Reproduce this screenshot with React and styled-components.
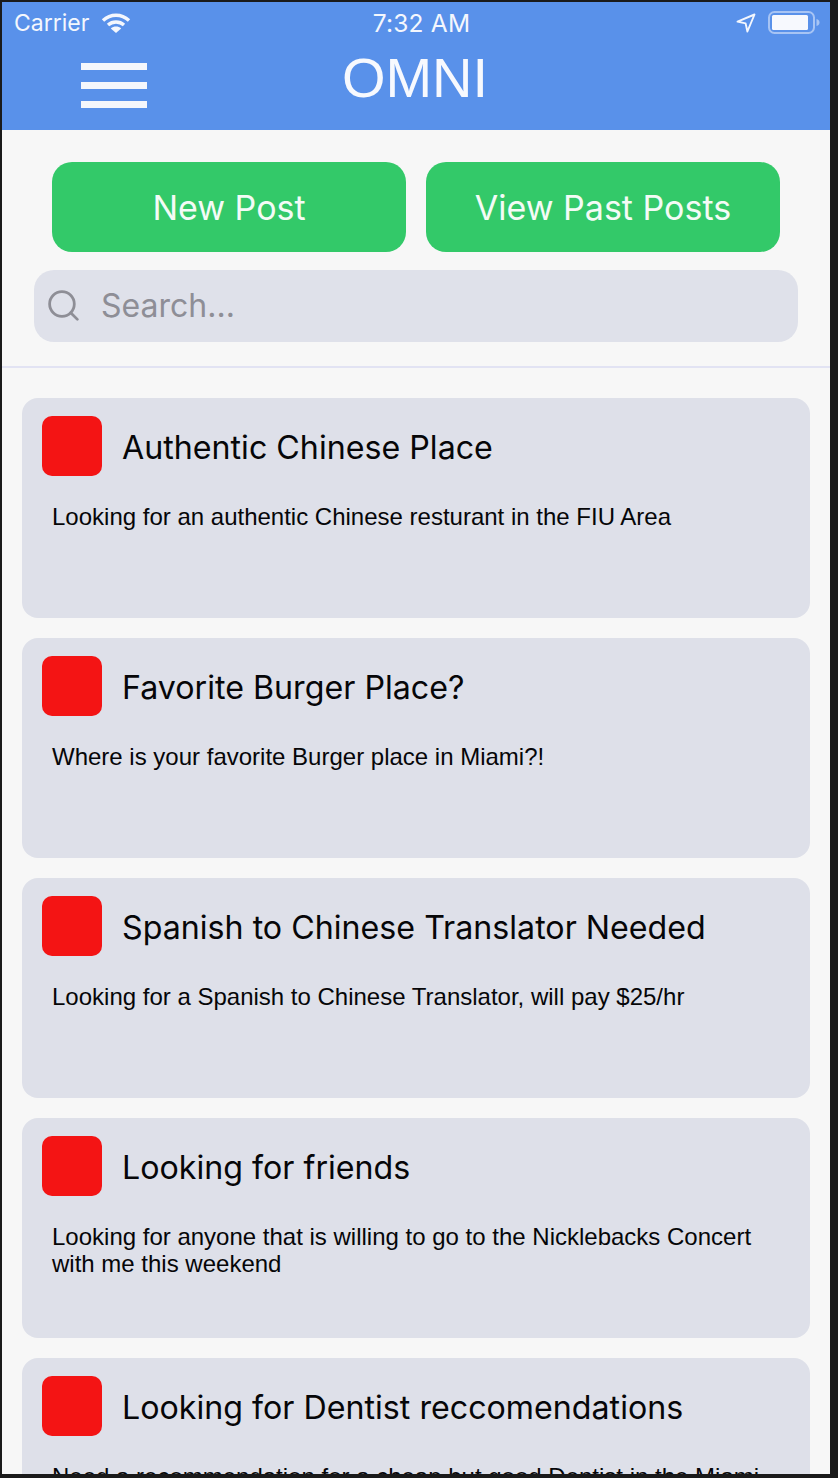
import React from "react";
import styled, { createGlobalStyle } from "styled-components";
import { Search } from "lucide-react";

const Global = createGlobalStyle`
  html, body { margin: 0; padding: 0; background: #1a1a1a; }
  body { width: 838px; height: 1478px; overflow: hidden; }
  * { box-sizing: border-box; }
`;

const Frame = styled.div`
  width: 838px;
  height: 1478px;
  padding: 2px 8px 4px 2px;
  background: #1a1a1a;
`;
const Screen = styled.div`
  width: 828px;
  height: 1472px;
  background: #f7f7f7;
  overflow: hidden;
  font-family: "Liberation Sans", Arial, sans-serif;
`;
const Header = styled.header`
  height: 128px;
  background: #5991ea;
  color: #fff;
  display: flex;
  flex-direction: column;
`;
const StatusBar = styled.div`
  height: 40px;
  display: grid;
  grid-template-columns: 1fr auto 1fr;
  align-items: center;
  padding: 2px 10px 0 12px;
  font-family: Inter, "Liberation Sans", sans-serif;
  font-size: 23px;
  color: #f4f7fd;
`;
const StatusLeft = styled.div`
  display: flex;
  align-items: center;
  gap: 12px;
`;
const StatusRight = styled.div`
  display: flex;
  align-items: center;
  justify-content: flex-end;
  gap: 12px;
`;
const Time = styled.span`
  font-size: 24.5px;
  letter-spacing: 0.2px;
  margin-left: 9px;
`;
const TitleBar = styled.div`
  position: relative;
  flex: 1;
  display: flex;
  align-items: flex-start;
  justify-content: center;
  padding-right: 2px;
`;
const Title = styled.h1`
  margin: 3px 0 0 0;
  font-family: "Liberation Sans", Arial, sans-serif;
  font-weight: 400;
  font-size: 56px;
  line-height: 66px;
  color: #f7f9fe;
`;
const MenuButton = styled.button`
  position: absolute;
  left: 79px;
  top: 21px;
  width: 66px;
  height: 45px;
  padding: 0;
  border: 0;
  background: none;
  display: flex;
  flex-direction: column;
  justify-content: space-between;
`;
const MenuLine = styled.span`
  display: block;
  height: 7px;
  background: #f5f7fc;
`;
const Actions = styled.div`
  display: flex;
  gap: 20px;
  padding: 32px 50px 0;
`;
const ActionButton = styled.button`
  flex: 1;
  height: 90px;
  border: 0;
  border-radius: 20px;
  background: #33c969;
  color: #f4fbf6;
  font-family: Inter, "Liberation Sans", sans-serif;
  font-size: 34px;
  font-weight: 400;
  padding: 0;
`;
const SearchWrap = styled.div`
  padding: 18px 32px 24px;
  border-bottom: 2px solid #e2e3f3;
`;
const SearchBox = styled.div`
  height: 72px;
  border-radius: 20px;
  background: #dfe1ea;
  display: flex;
  align-items: center;
  padding: 0 0 2px 11px;
  gap: 19px;
  color: #8e8e96;
  font-family: Inter, "Liberation Sans", sans-serif;
  font-size: 32px;
`;
const List = styled.div`
  padding: 30px 20px 0;
  display: flex;
  flex-direction: column;
  gap: 20px;
`;
const Card = styled.article`
  height: 220px;
  flex: none;
  border-radius: 16px;
  background: #dee0e9;
  padding: 18px 20px 0;
`;
const CardHead = styled.div`
  display: flex;
  align-items: center;
  gap: 20px;
`;
const Avatar = styled.div`
  width: 60px;
  height: 60px;
  border-radius: 10px;
  background: #f41414;
  flex: none;
`;
const CardTitle = styled.h2`
  margin: 2px 0 0;
  font-family: Inter, "Liberation Sans", sans-serif;
  font-weight: 400;
  font-size: 32.2px;
  color: #060608;
`;
const CardBody = styled.p`
  margin: 27px 0 0 10px;
  width: 730px;
  font-family: "Liberation Sans", Arial, sans-serif;
  font-size: 24px;
  line-height: 27px;
  color: #060608;
`;

const posts = [
  ["Authentic Chinese Place", "Looking for an authentic Chinese resturant in the FIU Area"],
  ["Favorite Burger Place?", "Where is your favorite Burger place in Miami?!"],
  ["Spanish to Chinese Translator Needed", "Looking for a Spanish to Chinese Translator, will pay $25/hr"],
  ["Looking for friends", "Looking for anyone that is willing to go to the Nicklebacks Concert with me this weekend"],
  ["Looking for Dentist reccomendations", "Need a recommendation for a cheap but good Dentist in the Miami area"],
];

const Wifi = () => (
  <svg width="30" height="22" viewBox="0 0 30 22" fill="none" stroke="#f4f7fd" strokeWidth="3.4">
    <path d="M2 8.5C9.5 1.5 20.5 1.5 28 8.5" />
    <path d="M7 13C11.5 9 18.5 9 23 13" />
    <path d="M15 21l-5.2-4.6c3-2.4 7.4-2.4 10.4 0z" fill="#f4f7fd" stroke="none" />
  </svg>
);
const Arrow = () => (
  <svg width="20" height="20" viewBox="0 0 20 20" fill="none" stroke="#f4f7fd" strokeWidth="1.9" strokeLinejoin="round">
    <path d="M1.5 8.6 18.5 1.5 11.4 18.5 9.6 10.4z" />
  </svg>
);
const Battery = () => (
  <svg width="52" height="24" viewBox="0 0 52 24">
    <rect x="1" y="1" width="45" height="21" rx="5.5" fill="none" stroke="#a7c4f4" strokeWidth="2" />
    <rect x="4" y="4" width="36" height="15" rx="1.5" fill="#f7f9fe" />
    <path d="M48.5 8c2 .4 3 1.8 3 3.5s-1 3.1-3 3.5z" fill="#a7c4f4" />
  </svg>
);

export default function App() {
  return (
    <Frame>
      <Global />
      <Screen>
        <Header>
          <StatusBar>
            <StatusLeft>
              <span>Carrier</span>
              <Wifi />
            </StatusLeft>
            <Time>7:32 AM</Time>
            <StatusRight>
              <Arrow />
              <Battery />
            </StatusRight>
          </StatusBar>
          <TitleBar>
            <MenuButton aria-label="Menu">
              <MenuLine />
              <MenuLine />
              <MenuLine />
            </MenuButton>
            <Title>OMNI</Title>
          </TitleBar>
        </Header>
        <Actions>
          <ActionButton>New Post</ActionButton>
          <ActionButton>View Past Posts</ActionButton>
        </Actions>
        <SearchWrap>
          <SearchBox>
            <Search size={37} strokeWidth={1.8} color="#8e8e96" />
            <span>Search...</span>
          </SearchBox>
        </SearchWrap>
        <List>
          {posts.map(([title, body]) => (
            <Card key={title}>
              <CardHead>
                <Avatar />
                <CardTitle>{title}</CardTitle>
              </CardHead>
              <CardBody>{body}</CardBody>
            </Card>
          ))}
        </List>
      </Screen>
    </Frame>
  );
}
